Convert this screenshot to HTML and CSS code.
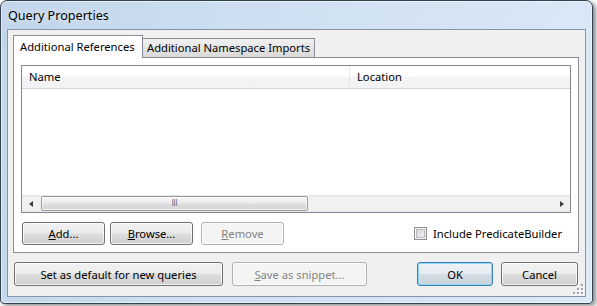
FILE: index.html
```html
<html>
	<head>
		<title>Query Properties</title>
		<link rel="stylesheet" href="styles.css">
	</head>
	<body>
		<div class="window">
			<div class="titlebar">Query Properties</div>
			<div class="client">
				<div class="tabs">
					<div class="tab selected">Additional References</div>
					<div class="tab">Additional Namespace Imports</div>
				</div>
				<div class="panel">
					<div class="listview">
						<div class="lvHeader">
							<div class="col colName">Name</div>
							<div class="col colLocation">Location</div>
						</div>
						<div class="lvBody"></div>
						<div class="hscroll">
							<div class="arrowBtn"><span class="arrow left"></span></div>
							<div class="track">
								<div class="thumb"><span class="gripLines">III</span></div>
							</div>
							<div class="arrowBtn"><span class="arrow right"></span></div>
						</div>
					</div>
					<div class="panelActions">
						<button class="btn btnAdd"><u>A</u>dd...</button>
						<button class="btn btnBrowse"><u>B</u>rowse...</button>
						<button class="btn btnRemove" disabled><u>R</u>emove</button>
						<label class="check"><span class="box"></span>Include PredicateBuilder</label>
					</div>
				</div>
				<div class="dialogActions">
					<button class="btn btnDefault">Set as default for new queries</button>
					<button class="btn btnSnippet" disabled><u>S</u>ave as snippet...</button>
					<button class="btn btnOk">OK</button>
					<button class="btn btnCancel">Cancel</button>
				</div>
				<svg class="sizeGrip" width="11" height="11" viewBox="0 0 11 11">
					<g fill="#ffffff">
						<rect x="9" y="1" width="2" height="2"/>
						<rect x="9" y="5" width="2" height="2"/>
						<rect x="5" y="5" width="2" height="2"/>
						<rect x="9" y="9" width="2" height="2"/>
						<rect x="5" y="9" width="2" height="2"/>
						<rect x="1" y="9" width="2" height="2"/>
					</g>
					<g fill="#a0a4a8">
						<rect x="8" y="0" width="2" height="2"/>
						<rect x="8" y="4" width="2" height="2"/>
						<rect x="4" y="4" width="2" height="2"/>
						<rect x="8" y="8" width="2" height="2"/>
						<rect x="4" y="8" width="2" height="2"/>
						<rect x="0" y="8" width="2" height="2"/>
					</g>
				</svg>
			</div>
		</div>
	</body>
</html>
```

FILE: styles.css
```css
body{
	margin:0px;
	background-color:white;
	font-family:"Noto Sans", "DejaVu Sans", sans-serif;
	font-size:11.2px;
	color:black;
}
.window{
	width:593px;
	height:304px;
	box-sizing:border-box;
	border:1px solid #34404e;
	border-radius:7px 7px 4px 4px;
	background:linear-gradient(100deg, #c2d5ea 0%, #cfe0f2 45%, #dbe9f8 100%);
	box-shadow:inset 0 0 0 1px rgba(255,255,255,0.55), 3px 2px 4px rgba(0,0,0,0.45);
	display:flex;
	flex-direction:column;
}
.titlebar{
	height:28px;
	padding-left:7px;
	display:flex;
	align-items:center;
	font-size:12.6px;
	text-shadow:0 0 6px rgba(255,255,255,0.9);
}
.client{
	position:relative;
	flex:1;
	margin:0 6px 6px 6px;
	border:1px solid #8595a7;
	background-color:#f0f0f0;
	padding:5px 7px 0 5px;
	display:flex;
	flex-direction:column;
}
.tabs{
	display:flex;
	align-items:flex-end;
	height:22px;
	white-space:nowrap;
}
.tab{
	box-sizing:border-box;
	height:19px;
	border:1px solid #898c95;
	border-bottom:none;
	background:linear-gradient(#f2f2f2, #e4e4e4 50%, #dadada);
	padding-left:4px;
	line-height:18px;
	width:173px;
	margin-left:-1px;
}
.tab.selected{
	position:relative;
	z-index:1;
	height:23px;
	margin-bottom:-1px;
	margin-left:0px;
	width:130px;
	background:white;
	padding-left:6px;
	line-height:22px;
}
.panel{
	height:196px;
	box-sizing:border-box;
	border:1px solid #898c95;
	background:white;
	padding:7px;
	margin-right:-1px;
}
.listview{
	height:148px;
	box-sizing:border-box;
	border:1px solid #828790;
	display:flex;
	flex-direction:column;
}
.lvHeader{
	height:23px;
	box-sizing:border-box;
	border-bottom:1px solid #d5d5d5;
	background:linear-gradient(white 0%, white 45%, #f4f5f6 50%, #f1f2f4 100%);
	display:flex;
}
.col{
	line-height:22px;
	padding-left:7px;
	box-sizing:border-box;
}
.colName{
	width:328px;
	border-right:1px solid #e4e6e9;
}
.lvBody{
	flex:1;
}
.hscroll{
	height:17px;
	display:flex;
	background:linear-gradient(#e4e4e4, #f1f1f1 15%, #f1f1f1 85%, #e8e8e8);
}
.arrowBtn{
	width:17px;
	display:flex;
	align-items:center;
	justify-content:center;
}
.arrow{
	width:0;
	height:0;
	border-top:3px solid transparent;
	border-bottom:3px solid transparent;
}
.arrow.left{
	border-right:4px solid #3c3c3c;
}
.arrow.right{
	border-left:4px solid #3c3c3c;
}
.track{
	flex:1;
	padding:0 2px;
}
.thumb{
	width:267px;
	height:15px;
	box-sizing:border-box;
	margin-top:1px;
	border:1px solid #9a9a9a;
	border-radius:2px;
	background:linear-gradient(#f7f7f7, #ececec 45%, #dcdcdc 55%, #d6d6d6);
	box-shadow:inset 0 0 0 1px rgba(255,255,255,0.7);
	display:flex;
	align-items:center;
	justify-content:center;
}
.gripLines{
	font-size:8px;
	color:#555;
	font-family:"DejaVu Sans", sans-serif;
	transform:scaleX(0.8);
	line-height:8px;
}
.panelActions{
	display:flex;
	align-items:center;
	margin-top:9px;
	padding-left:1px;
}
.btn{
	font-family:"Noto Sans", "DejaVu Sans", sans-serif;
	font-size:11.2px;
	color:black;
	height:23px;
	box-sizing:border-box;
	border:1px solid #707070;
	border-radius:3px;
	background:linear-gradient(#f2f2f2 0%, #ebebeb 48%, #dddddd 52%, #cfcfcf 100%);
	box-shadow:inset 0 0 0 1px rgba(255,255,255,0.75);
	padding:0;
	margin:0;
	white-space:nowrap;
}
.btn:disabled{
	border-color:#adb2b5;
	background:#f4f4f4;
	color:#838383;
}
.btnAdd, .btnBrowse, .btnRemove{
	width:83px;
}
.btnBrowse{
	margin-left:5px;
}
.btnRemove{
	margin-left:8px;
}
.check{
	margin-left:auto;
	margin-right:9px;
	display:flex;
	align-items:center;
	white-space:nowrap;
}
.box{
	width:13px;
	height:13px;
	box-sizing:border-box;
	border:1px solid #8e8f8f;
	background:linear-gradient(135deg, #cfd2d6, #f4f4f4);
	box-shadow:inset 0 0 0 1px #f6f6f6, inset 0 0 0 2px #b5b9bd;
	margin-right:6px;
}
.dialogActions{
	display:flex;
	margin-top:9px;
	padding-left:1px;
}
.dialogActions .btn{
	height:24px;
}
.btnDefault{
	width:209px;
}
.btnSnippet{
	width:135px;
	margin-left:9px;
}
.btnOk{
	width:76px;
	margin-left:auto;
	border-color:#3c7fb1;
	background:linear-gradient(#eef3f7 0%, #e5ebf0 48%, #d4dde5 52%, #c9d3dc 100%);
	box-shadow:inset 0 0 0 1px #8fd3f5;
}
.btnCancel{
	width:77px;
	margin-left:8px;
}
.sizeGrip{
	position:absolute;
	right:1px;
	bottom:1px;
}
```
